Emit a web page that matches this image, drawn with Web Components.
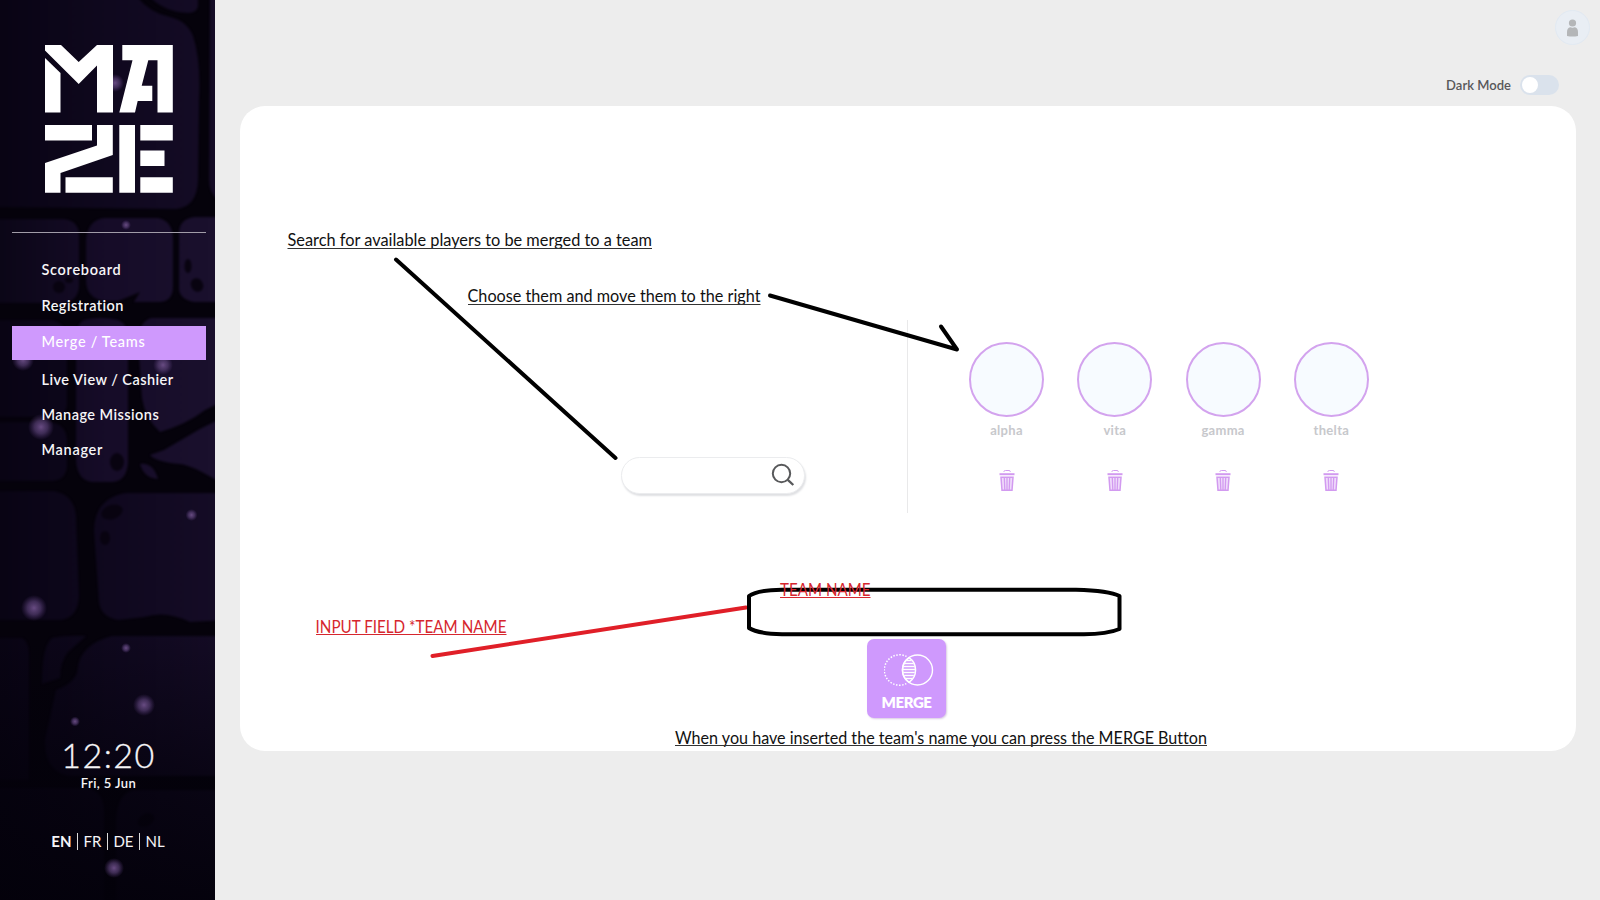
<!DOCTYPE html>
<html lang="en">
<head>
<meta charset="utf-8">
<title>Maze – Merge / Teams</title>
<style>
html,body{margin:0;height:100%;overflow:hidden}
body{font-family:Lato,"Open Sans",sans-serif;background:#ededed;font-variant-ligatures:none}
</style>
</head>
<body>
<maze-app></maze-app>
<script>
const define = (name, html) => {
  const t = document.createElement('template');
  t.innerHTML = html;
  customElements.define(name, class extends HTMLElement {
    constructor() {
      super();
      this.attachShadow({ mode: 'open' }).appendChild(t.content.cloneNode(true));
    }
  });
};

define('maze-wall', `
<style>:host{display:block;position:absolute;inset:0}svg{display:block}</style>
<svg width="215" height="900" viewBox="0 0 215 900">
  <defs>
    <radialGradient id="g"><stop offset="0" stop-color="#6d4f88" stop-opacity=".95"/><stop offset=".5" stop-color="#563e72" stop-opacity=".7"/><stop offset="1" stop-color="#4a3068" stop-opacity="0"/></radialGradient>
    <linearGradient id="b" x1="0" y1="0" x2="215" y2="0" gradientUnits="userSpaceOnUse"><stop offset="0" stop-color="#090414"/><stop offset=".5" stop-color="#0f081e"/><stop offset="1" stop-color="#150c26"/></linearGradient>
    <linearGradient id="c" x1="0" y1="0" x2="215" y2="0" gradientUnits="userSpaceOnUse"><stop offset="0" stop-color="#0b0617"/><stop offset=".5" stop-color="#160c28"/><stop offset="1" stop-color="#1a102d"/></linearGradient>
    <linearGradient id="d" x1="0" y1="620" x2="0" y2="900" gradientUnits="userSpaceOnUse"><stop offset="0" stop-color="#03010a" stop-opacity="0"/><stop offset=".6" stop-color="#03010a" stop-opacity=".65"/><stop offset="1" stop-color="#03010a" stop-opacity=".9"/></linearGradient>
    <filter id="f" color-interpolation-filters="sRGB"><feGaussianBlur stdDeviation=".9"/></filter>
  </defs>
  <rect width="215" height="900" fill="#05020b"/>
  <g filter="url(#f)">
    <path fill="url(#b)" d="M-10-10H132Q146 12 170 17Q187 21 193 36Q201 60 199 100L198 180Q197 207 176 209L-10 207Z"/>
    <path fill="url(#b)" d="M144-10H198V6Q197 13 188 13Q160 12 144-10ZM210-10H230V205Q209 200 209 180Z"/>
    <path fill="url(#c)" d="M-10 219H64Q79 221 79 236V286Q78 302 62 303H-10Z"/>
    <path fill="url(#c)" d="M104 218H158Q173 221 173 240V286Q173 301 160 302H134L140 292L118 301H104Q86 298 86 280V240Q88 220 104 218Z"/>
    <path fill="url(#c)" d="M194 217H230V302H194Q179 299 179 288V232Q180 219 194 217Z"/>
    <path fill="url(#b)" d="M-10 320H52Q66 323 67 338V404Q66 416 54 417H-10ZM-10 422H50Q66 424 67 440V466Q66 480 52 481H-10Z"/>
    <path fill="url(#c)" d="M84 320Q100 316 118 320Q128 324 128 338V462Q127 481 112 482H92Q77 480 76 460V340Q76 324 84 320Z"/>
    <path fill="url(#c)" d="M152 318H230V398L205 410Q187 424 160 432Q145 418 142 398L138 340Q140 320 152 318Z"/>
    <path fill="url(#c)" d="M230 414L200 429L164 450L150 455Q156 462 180 464Q196 466 230 489ZM140 464Q153 462 158 479Q144 478 140 464Z"/>
    <path fill="url(#b)" d="M-10 491H54Q74 495 76 516L79 596Q78 618 60 620H-10Z"/>
    <path fill="url(#b)" d="M126 493H230V620L190 622Q166 610 144 617L118 620Q101 617 99 602L94 530Q95 498 126 493Z"/>
    <path fill="url(#b)" d="M-10 638H22Q29 642 29 655V780H-10ZM52 638Q66 635 86 636L68 652Q60 662 60 678L42 684Q42 646 52 638Z"/>
    <path fill="url(#b)" d="M112 636H230V776H70Q44 772 45 740L56 690Q78 682 78 666Q82 644 112 636Z"/>
    <path fill="url(#b)" d="M-10 788H88Q104 792 104 812V910H-10ZM134 790H230V910H116V820Q118 792 134 790Z"/>
    <g fill="#080310"><ellipse cx="188" cy="266" rx="3.500" ry="7"/><ellipse cx="197" cy="285" rx="6" ry="7" transform="rotate(-30 197 285)"/><ellipse cx="59" cy="287" rx="6" ry="6"/><ellipse cx="69" cy="280" rx="4" ry="3"/><ellipse cx="117" cy="462" rx="7" ry="9"/><ellipse cx="112" cy="512" rx="11" ry="7" transform="rotate(-18 112 512)"/><ellipse cx="105" cy="538" rx="5" ry="7"/><ellipse cx="146" cy="820" rx="9" ry="6" transform="rotate(-30 146 820)"/></g>
  </g>
  <rect y="620" width="215" height="280" fill="url(#d)"/>
  <g fill="url(#g)"><circle cx="115" cy="83" r="9"/><circle cx="126" cy="225" r="5"/><circle cx="23" cy="360" r="11"/><circle cx="163" cy="365" r="10"/><circle cx="41" cy="427" r="13"/><circle cx="191.500" cy="515" r="6"/><circle cx="34" cy="608" r="13"/><circle cx="126" cy="648" r="5"/><circle cx="144" cy="705" r="11"/><circle cx="75" cy="721.500" r="5"/><circle cx="114" cy="868" r="10"/></g>
</svg>`);

define('maze-logo', `
<style>:host{display:block;width:128px;height:148px}svg{display:block}</style>
<svg width="128" height="148" viewBox="45 45 128 148" fill="#fff">
  <path d="M45 45H61L78.700 62L97 45H113V112.500H97V65.500L78.700 84L45 50.500Z"/>
  <path d="M45 58L60.500 73V112.500H45Z"/>
  <path d="M122.300 45H172.800V112.500H157.500V60.300H148.300L141.700 85.700H152.300V101H137.700L135 112.500H119.300L132.500 60.300H122.300Z"/>
  <path d="M45 125H92V140.500H45ZM97 125H112.800V155L60.500 173V192.700H45V163L97 145.500ZM65.500 177.200H112.800V192.700H65.500ZM119.300 125H135V192.700H119.300ZM140.300 125H172.800V140.500H140.300ZM140.300 150.500H164.500V166H140.300ZM140.300 177.200H172.800V192.700H140.300Z"/>
</svg>`);

define('nav-item', `
<style>
:host{display:flex;align-items:center;box-sizing:border-box;padding:0 0 2px 29.5px;color:#f6f5f7;font-size:14.5px;font-weight:600;letter-spacing:var(--track,.45px);white-space:pre}
:host([active]){background:#cf99fd;margin:2px 0;padding-bottom:3px;font-weight:500;color:#fff}
</style><slot></slot>`);

define('maze-sidebar', `
<style>
:host{display:flex;flex-direction:column;position:relative;width:215px;height:900px;box-sizing:border-box;padding:45px 9px 0 12px;color:#f6f5f7}
.in{position:relative;display:flex;flex-direction:column;height:100%}
maze-logo{margin-left:33px}
hr{border:0;height:1px;width:100%;margin:39px 0 19px;background:#a19ca8}
nav{display:grid;grid-template-rows:36px 36px 38px 36px 35px 35px}
.clock{margin-top:263px;text-align:center;font-size:34px;line-height:48px;font-weight:300;letter-spacing:1.5px;-webkit-text-stroke:.3px;margin-left:-1px}
.date{text-align:center;font-size:13px;line-height:18px;font-weight:600;letter-spacing:.4px;margin-top:-5px;margin-left:-1px}
.lang{margin:29px 0 0 -2px;display:flex;justify-content:center;font-size:15px;line-height:40px;gap:5.500px}
.lang i{width:1px;height:17px;background:#ddd;align-self:center}
</style>
<maze-wall></maze-wall>
<div class="in">
<maze-logo></maze-logo><hr>
<nav><nav-item style="--track:.7px">Scoreboard</nav-item><nav-item>Registration</nav-item><nav-item active style="--track:.7px">Merge / Teams</nav-item><nav-item>Live View / Cashier</nav-item><nav-item>Manage Missions</nav-item><nav-item style="--track:.7px">Manager</nav-item></nav>
<div class="clock">12:20</div><div class="date">Fri, 5 Jun</div>
<div class="lang"><b>EN</b><i></i><span>FR</span><i></i><span>DE</span><i></i><span>NL</span></div>
</div>`);

define('user-avatar', `
<style>:host{display:block;width:35px;height:35px}svg{display:block}</style>
<svg width="35" height="35"><circle cx="17.500" cy="17.500" r="17" fill="#e9eef4" stroke="#e1e9f2"/><g fill="#b4b6b8"><circle cx="17.500" cy="13" r="3.600"/><path d="M12 26V22Q12 17.300 16 17.300Q17.500 18.300 19 17.300Q23 17.300 23 22V26Q17.500 27 12 26Z"/></g></svg>`);

define('mode-toggle', `
<style>
:host{display:flex;align-items:center;gap:9px;color:#57575a;font-size:13px;font-weight:600;letter-spacing:.02px}
span{display:block;width:39px;height:20px;border-radius:10px;background:#dae2ec;box-sizing:border-box;padding:2px}
span::before{content:"";display:block;width:16px;height:16px;border-radius:50%;background:#fff}
</style><slot></slot><span></span>`);

define('search-box', `
<style>
:host{display:flex;align-items:center;justify-content:flex-end;box-sizing:border-box;width:184px;height:37px;border-radius:19px;border:1px solid #ebecee;background:#fff;box-shadow:1px 2px 2px #dfe0e3;padding:0 9px 1px 0}
</style><svg width="24" height="24" fill="none" stroke="#58595b"><circle cx="10.500" cy="10.500" r="8.700" stroke-width="2"/><path d="M16.800 16.800L22.300 22" stroke-width="2.300"/></svg>`);

define('team-slot', `
<style>
:host{display:flex;flex-direction:column;align-items:center;width:76px;color:#c7c8cc;font-size:13px;font-weight:700;letter-spacing:.3px}
.c{width:75px;height:75px;box-sizing:border-box;border:2px solid #d3a3ee;border-radius:50%;background:#f7fbff}
.n{line-height:20px;margin-top:3px;height:49px}
svg{display:block}
</style>
<div class="c"></div><div class="n"><slot></slot></div>
<svg width="18" height="23" fill="none" stroke="#d29af0"><path d="M5.800 2.800Q6 1.500 7.500 1.500H11Q12.200 1.500 12.400 2.800" stroke-width="1"/><path d="M1.500 5.200H16.500" stroke-width="2"/><path fill="#f0dcfb" d="M3 8.300H15L14 21.300H4Z" stroke-width="1.500"/><path d="M6.300 9L6.800 21M9 9V21M11.700 9L11.200 21" stroke-width="1.300"/></svg>`);

define('merge-button', `
<style>
:host{display:flex;flex-direction:column;align-items:center;box-sizing:border-box;width:79px;height:79px;border-radius:7px;background:#cf99fd;box-shadow:1px 1px 2px #d9cbe3;color:#fff;font-size:15px;font-weight:800;padding:14px 0 0 1px}
svg{display:block;margin-left:3px}div{line-height:20px;margin-top:5px;letter-spacing:-.4px;margin-right:1px}
</style>
<svg width="50" height="34" viewBox="0 0 50 34" fill="none" stroke="#fff"><defs><clipPath id="k"><path d="M25 5A15 15 0 0 1 25 29A15 15 0 0 1 25 5"/></clipPath></defs><path d="M22.500 3.500A15.200 15.200 0 1 0 22.500 30.500" stroke-width="1.500" stroke-dasharray="1.500 1.500"/><circle cx="33.500" cy="17" r="15" stroke-width="1.400"/><path d="M25 4.600A15 15 0 0 1 25 29.400A15 15 0 0 1 25 4.600" stroke-width="1.500"/><path clip-path="url(#k)" d="M16 7.500H34M16 10.500H34M16 13.500H34M16 16.500H34M16 19.500H34M16 22.500H34M16 25.500H34" stroke-width="1.400"/></svg>
<div><slot></slot></div>`);

define('merge-card', `
<style>
:host{display:grid;grid-template-columns:667px 1fr;grid-template-rows:193px 1fr;box-sizing:border-box;width:1336px;height:645px;border-radius:25px;background:#fff;padding-top:214px}
.l{border-right:1px solid #e9e9ea;box-sizing:border-box;width:668px;display:flex;padding:137px 0 0 381px}
.r{display:flex;gap:32.300px;padding:22px 0 0 61.500px}
.m{grid-column:1/3;display:flex;justify-content:center;padding:126px 3px 0 0}
</style>
<div class="l"><search-box></search-box></div>
<div class="r"><team-slot>alpha</team-slot><team-slot>vita</team-slot><team-slot>gamma</team-slot><team-slot>thelta</team-slot></div>
<div class="m"><merge-button>MERGE</merge-button></div>`);

/* Hand-drawn guide notes floating over the page */
define('guide-notes', `
<style>:host{display:block;position:absolute;inset:0;pointer-events:none}svg{display:block;font-family:Lato,sans-serif;font-size:16.600px}</style>
<svg width="1600" height="900" fill="none" stroke-linecap="round" stroke-linejoin="round">
  <path d="M432.500 656L746 607.500" stroke="#e01f28" stroke-width="4"/>
  <g stroke="#000" stroke-width="4">
    <path d="M396 259.500L615.500 458"/><path d="M770 295.500L957 349.500L941 326.500"/>
    <path d="M749 596Q757 590 782 589.700H1076Q1109 590.500 1119.500 596V629Q1107 634.300 1084 634.300H782Q757 633.500 749 628Z"/>
  </g>
  <g fill="#111">
    <text x="287.500" y="246.300" textLength="364.500" lengthAdjust="spacingAndGlyphs">Search for available players to be merged to a team</text>
    <text x="467.500" y="302" textLength="293" lengthAdjust="spacingAndGlyphs">Choose them and move them to the right</text>
    <text x="675" y="743.500" textLength="532" lengthAdjust="spacingAndGlyphs">When you have inserted the team's name you can press the MERGE Button</text>
  </g>
  <path d="M287.500 248.500H652M468 304.500H760.500M675 745.500H1207" stroke="#333" stroke-linecap="butt"/>
  <g fill="#d6262e">
    <text x="315.500" y="633" textLength="191" lengthAdjust="spacingAndGlyphs">INPUT FIELD *TEAM NAME</text>
    <text x="780" y="595.500" textLength="90.500" lengthAdjust="spacingAndGlyphs">TEAM NAME</text>
  </g>
  <path d="M316 634.500H506.500M780 597.500H870.500" stroke="#d6262e" stroke-linecap="butt"/>
</svg>`);

define('maze-app', `
<style>
:host{display:flex;position:relative;width:1600px;height:900px;background:#ededed;overflow:hidden}
main{flex:1;display:flex;flex-direction:column;padding:10px 0 0 25px}
user-avatar{margin-left:1315px}
mode-toggle{margin:30px 41px 11px 0;align-self:flex-end}
</style>
<maze-sidebar></maze-sidebar>
<main><user-avatar></user-avatar><mode-toggle>Dark Mode</mode-toggle><merge-card></merge-card></main>
<guide-notes></guide-notes>`);
</script>
</body>
</html>
